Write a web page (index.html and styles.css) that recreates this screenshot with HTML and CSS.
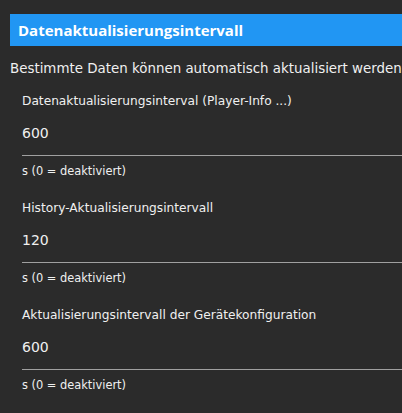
FILE: index.html
```html
<!DOCTYPE html>
<html lang="de">
<head>
<meta charset="utf-8">
<link rel="stylesheet" href="styles.css">
</head>
<body>
<div class="page">
  <div class="section-title">Datenaktualisierungsintervall</div>
  <div class="section-desc">Bestimmte Daten können automatisch aktualisiert werden</div>
  <div class="fields">
    <div class="field">
      <div class="field-label">Datenaktualisierungsinterval (Player-Info ...)</div>
      <div class="field-value">600</div>
      <div class="field-hint">s (0 = deaktiviert)</div>
    </div>
    <div class="field">
      <div class="field-label">History-Aktualisierungsintervall</div>
      <div class="field-value">120</div>
      <div class="field-hint">s (0 = deaktiviert)</div>
    </div>
    <div class="field">
      <div class="field-label">Aktualisierungsintervall der Gerätekonfiguration</div>
      <div class="field-value">600</div>
      <div class="field-hint">s (0 = deaktiviert)</div>
    </div>
  </div>
</div>
</body>
</html>
```
FILE: styles.css
```css
html, body {
  margin: 0;
  padding: 0;
  background: #2b2b2b;
  overflow: hidden;
}
.page {
  padding: 14px 0 0 10px;
  font-family: "DejaVu Sans", sans-serif;
  color: #f0f0f0;
  white-space: nowrap;
  overflow: hidden;
}
.section-title {
  background: #2196f3;
  color: #ffffff;
  font-family: "Open Sans", "DejaVu Sans", sans-serif;
  font-weight: bold;
  font-size: 15px;
  height: 32px;
  line-height: 32px;
  padding-left: 8px;
}
.section-desc {
  font-size: 13.4px;
  margin-top: 14px;
  line-height: 18px;
}
.fields {
  padding-left: 12px;
  margin-top: 15px;
}
.field {
  height: 107px;
  display: flex;
  flex-direction: column;
}
.field-label {
  font-size: 12.2px;
  line-height: 16px;
}
.field-value {
  font-size: 14px;
  line-height: 20px;
  margin-top: 14px;
  padding-bottom: 12px;
  border-bottom: 1px solid #a0a0a0;
}
.field-hint {
  font-size: 11.4px;
  line-height: 16px;
  margin-top: 7px;
}
```
